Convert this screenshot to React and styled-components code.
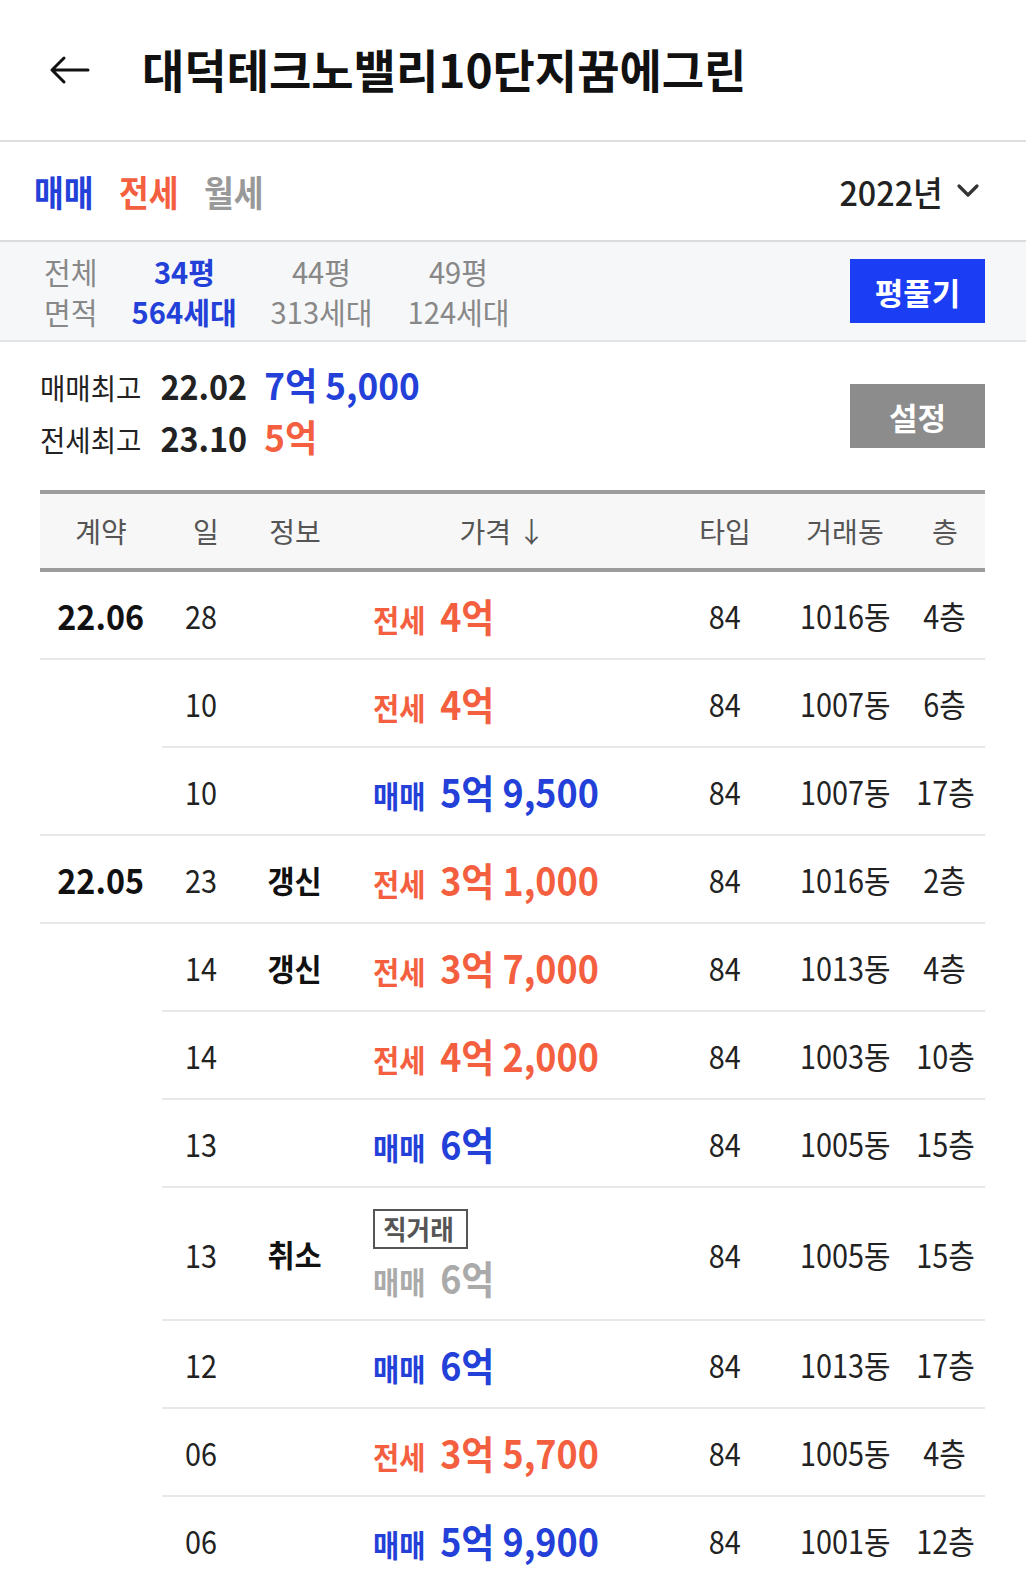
import React from 'react'
import styled, { createGlobalStyle } from 'styled-components'

const Global = createGlobalStyle`
  html, body { margin: 0; padding: 0; background: #fff; }
  body { font-family: "Noto Sans CJK KR", "Noto Sans", sans-serif; color: #111; }
`

const BLUE = '#2340d8'
const ORANGE = '#f4603f'

// the screenshot font is narrow; runs of text get squeezed sideways
const Sq = styled.span`
  display: inline-block;
  white-space: nowrap;
  transform: scaleX(${p => p.$s || 0.9});
  transform-origin: ${p => p.$o || 'left'} center;
`

const Page = styled.div`
  width: 1026px;
  overflow: hidden;
`

const TopBar = styled.header`
  height: 140px;
  display: flex;
  align-items: center;
  padding-left: 48px;
  gap: 52px;
  border-bottom: 2px solid #dedede;
`

const Title = styled.h1`
  margin: 0;
  margin-top: -4px;
  font-size: 46px;
  font-weight: 700;
  color: #111;
`

const Tabs = styled.div`
  height: 98px;
  display: flex;
  align-items: center;
  justify-content: space-between;
  padding: 0 46px 0 34px;
  border-bottom: 2px solid #dcdcdc;
`

const TabGroup = styled.div`
  display: flex;
`

const Tab = styled.span`
  font-size: 36px;
  font-weight: 700;
  color: ${p => p.$c};
  width: 85px;
`

const Year = styled.div`
  display: flex;
  align-items: center;
  gap: 13px;
  font-size: 34px;
  font-weight: 500;
  color: #222;
`

const Filter = styled.div`
  height: 98px;
  display: flex;
  align-items: center;
  justify-content: space-between;
  background: #f6f7f9;
  border-bottom: 2px solid #e4e4e4;
  padding: 0 41px 0 44px;
`

const SizeGrid = styled.div`
  display: grid;
  grid-template-columns: 72px 137px 137px 137px;
  grid-template-rows: 40px 40px;
  align-items: center;
  font-size: 30px;
  color: #888;
`

const SizeCell = styled.div`
  text-align: ${p => (p.$left ? 'left' : 'center')};
  color: ${p => (p.$active ? BLUE : '#888')};
  font-weight: ${p => (p.$active ? 700 : 400)};
`

const Btn = styled.button`
  width: 135px;
  height: 64px;
  border: none;
  border-radius: 0;
  background: ${p => p.$bg};
  color: #fff;
  font-family: inherit;
  font-size: 31px;
  font-weight: 700;
  display: flex;
  align-items: center;
  justify-content: center;
  padding: 0;
`

const Stats = styled.div`
  height: 148px;
  display: flex;
  align-items: center;
  justify-content: space-between;
  padding: 0 41px 0 40px;
`

const StatLines = styled.div`
  display: flex;
  flex-direction: column;
  gap: 2px;
  margin-top: -12px;
`

const StatLine = styled.div`
  height: 50px;
  display: flex;
  align-items: center;
`

const StatLabel = styled.span`
  font-size: 29px;
  color: #222;
  margin-right: 20px;
`

const StatDate = styled.span`
  font-size: 34px;
  font-weight: 600;
  color: #222;
  margin-right: 18px;
`

const StatPrice = styled.span`
  font-size: 37px;
  font-weight: 700;
  color: ${p => p.$c};
`

const Table = styled.div`
  margin: 0 41px 0 40px;
  border-top: 4px solid #9c9c9c;
`

const Cols = `
  display: grid;
  grid-template-columns: 122px 88px 90px 325px 120px 120px 80px;
`

const HeadRow = styled.div`
  ${Cols}
  height: 74px;
  align-items: center;
  background: #f7f7f7;
  border-bottom: 4px solid #9c9c9c;
  font-size: 28px;
  color: #555;
`

const HeadCell = styled.div`
  text-align: center;
`

const Row = styled.div`
  ${Cols}
  height: ${p => (p.$tall ? 133 : 88)}px;
`

const Cell = styled.div`
  display: flex;
  align-items: center;
  justify-content: ${p => p.$j || 'center'};
  padding-left: ${p => p.$pl || 0}px;
  border-bottom: 2px solid #e8e8e8;
  font-size: 32px;
  color: #222;
  box-sizing: border-box;
`

const DateCell = styled(Cell)`
  border-bottom-color: ${p => (p.$line ? '#e8e8e8' : 'transparent')};
  font-size: 34px;
  font-weight: 700;
  color: #111;
`

const InfoCell = styled(Cell)`
  font-weight: 700;
  font-size: 31px;
  color: #111;
`

const PriceBox = styled.div`
  display: flex;
  flex-direction: column;
  align-items: flex-start;
  padding-top: ${p => (p.$badge ? 6 : 0)}px;
`

const Price = styled.div`
  display: flex;
  align-items: baseline;
  color: ${p => p.$c};
  font-weight: 700;
`

const Kind = styled.span`
  font-size: 31px;
  margin-right: 16px;
`

const Amount = styled.span`
  font-size: 39px;
`

const Badge = styled.span`
  display: inline-block;
  border: 2px solid #555;
  color: #555;
  font-size: 27px;
  font-weight: 700;
  padding: 0 8px;
  line-height: 36px;
`

const BackArrow = () => (
  <svg width="42" height="30" viewBox="0 0 42 30">
    <path d="M40 15H4M16 3L4 15l12 12" fill="none" stroke="#111" strokeWidth="3" strokeLinecap="round" strokeLinejoin="round" />
  </svg>
)

const Chevron = () => (
  <svg width="24" height="16" viewBox="0 0 24 16">
    <path d="M3 3l9 9 9-9" fill="none" stroke="#333" strokeWidth="3.2" strokeLinecap="round" strokeLinejoin="round" />
  </svg>
)

const deals = [
  { date: '22.06', day: '28', kind: '전세', amt: '4억', dong: '1016동', fl: '4층', first: true },
  { day: '10', kind: '전세', amt: '4억', dong: '1007동', fl: '6층' },
  { day: '10', kind: '매매', amt: '5억 9,500', dong: '1007동', fl: '17층', last: true },
  { date: '22.05', day: '23', info: '갱신', kind: '전세', amt: '3억 1,000', dong: '1016동', fl: '2층', first: true },
  { day: '14', info: '갱신', kind: '전세', amt: '3억 7,000', dong: '1013동', fl: '4층' },
  { day: '14', kind: '전세', amt: '4억 2,000', dong: '1003동', fl: '10층' },
  { day: '13', kind: '매매', amt: '6억', dong: '1005동', fl: '15층' },
  { day: '13', info: '취소', kind: '매매', amt: '6억', dong: '1005동', fl: '15층', direct: true },
  { day: '12', kind: '매매', amt: '6억', dong: '1013동', fl: '17층' },
  { day: '06', kind: '전세', amt: '3억 5,700', dong: '1005동', fl: '4층' },
  { day: '06', kind: '매매', amt: '5억 9,900', dong: '1001동', fl: '12층' },
]

const DealRow = ({ d }) => {
  const color = d.direct ? '#aaa' : d.kind === '매매' ? BLUE : ORANGE
  return (
    <Row $tall={d.direct}>
      <DateCell $line={d.first || d.last}>
        {d.date && <Sq $s={0.95} $o="center">{d.date}</Sq>}
      </DateCell>
      <Cell $j="flex-start" $pl={23}><Sq>{d.day}</Sq></Cell>
      <InfoCell>{d.info && <Sq $s={0.95} $o="center">{d.info}</Sq>}</InfoCell>
      <Cell $j="flex-start" $pl={33}>
        <PriceBox $badge={d.direct}>
          {d.direct && <Badge><Sq $s={0.95}>직거래</Sq></Badge>}
          <Sq $s={0.92}>
            <Price $c={color}>
              <Kind>{d.kind}</Kind>
              <Amount>{d.amt}</Amount>
            </Price>
          </Sq>
        </PriceBox>
      </Cell>
      <Cell><Sq $o="center">84</Sq></Cell>
      <Cell><Sq $o="center">{d.dong}</Sq></Cell>
      <Cell><Sq $o="center">{d.fl}</Sq></Cell>
    </Row>
  )
}

export default function App() {
  return (
    <Page>
      <Global />
      <TopBar>
        <BackArrow />
        <Title><Sq $s={1}>대덕테크노밸리10단지꿈에그린</Sq></Title>
      </TopBar>

      <Tabs>
        <TabGroup>
          <Tab $c={BLUE}><Sq>매매</Sq></Tab>
          <Tab $c={ORANGE}><Sq>전세</Sq></Tab>
          <Tab $c="#999"><Sq>월세</Sq></Tab>
        </TabGroup>
        <Year>
          <Sq $s={0.95} $o="right">2022년</Sq>
          <Chevron />
        </Year>
      </Tabs>

      <Filter>
        <SizeGrid>
          <SizeCell $left><Sq $s={0.97}>전체</Sq></SizeCell>
          <SizeCell $active><Sq $s={0.97} $o="center">34평</Sq></SizeCell>
          <SizeCell><Sq $s={0.97} $o="center">44평</Sq></SizeCell>
          <SizeCell><Sq $s={0.97} $o="center">49평</Sq></SizeCell>
          <SizeCell $left><Sq $s={0.97}>면적</Sq></SizeCell>
          <SizeCell $active><Sq $s={0.97} $o="center">564세대</Sq></SizeCell>
          <SizeCell><Sq $s={0.97} $o="center">313세대</Sq></SizeCell>
          <SizeCell><Sq $s={0.97} $o="center">124세대</Sq></SizeCell>
        </SizeGrid>
        <Btn $bg="#1b3ef5">평풀기</Btn>
      </Filter>

      <Stats>
        <StatLines>
          <StatLine>
            <Sq $s={0.95}>
              <StatLabel>매매최고</StatLabel>
              <StatDate>22.02</StatDate>
              <StatPrice $c={BLUE}>7억 5,000</StatPrice>
            </Sq>
          </StatLine>
          <StatLine>
            <Sq $s={0.95}>
              <StatLabel>전세최고</StatLabel>
              <StatDate>23.10</StatDate>
              <StatPrice $c={ORANGE}>5억</StatPrice>
            </Sq>
          </StatLine>
        </StatLines>
        <Btn $bg="#8c8c8c">설정</Btn>
      </Stats>

      <Table>
        <HeadRow>
          <HeadCell>계약</HeadCell>
          <HeadCell>일</HeadCell>
          <HeadCell>정보</HeadCell>
          <HeadCell>가격 ↓</HeadCell>
          <HeadCell>타입</HeadCell>
          <HeadCell>거래동</HeadCell>
          <HeadCell>층</HeadCell>
        </HeadRow>
        {deals.map((d, i) => <DealRow key={i} d={d} />)}
      </Table>
    </Page>
  )
}
